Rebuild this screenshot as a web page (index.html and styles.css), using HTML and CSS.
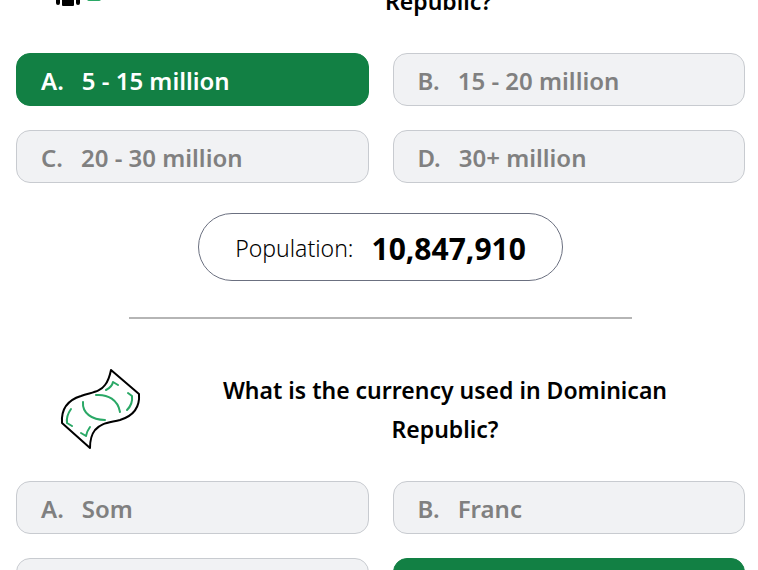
FILE: index.html
```html
<!DOCTYPE html>
<html lang="en">
  <head>
    <title>Dominican Republic Quiz</title>
    <meta charset="utf-8" />
    <meta name="viewport" content="width=device-width, initial-scale=1" />
    <link rel="stylesheet" href="styles.css">
  </head>
  <body>
    <main class="quiz">
      <section class="question">
        <div class="question-header">
          <svg class="icon-people" viewBox="0 0 76 48" aria-hidden="true">
            <g fill="#000">
              <circle cx="12" cy="7" r="6" />
              <rect x="6" y="15" width="12" height="33" rx="1" />
              <rect x="0" y="15" width="4" height="32" rx="2" />
              <rect x="20" y="15" width="4" height="32" rx="2" />
            </g>
            <g fill="none" stroke="#2aa866" stroke-width="2">
              <circle cx="38" cy="9" r="6" />
              <rect x="32" y="18" width="12" height="24" rx="1" />
              <circle cx="64" cy="9" r="6" />
              <path d="M58 34V20q0-2 2-2h8q2 0 2 2v14z" />
            </g>
          </svg>
          <h2>What is the population of Dominican Republic?</h2>
        </div>
        <div class="answers">
          <button type="button" class="answer correct"><span>A.</span><span>5 - 15 million</span></button>
          <button type="button" class="answer" disabled><span>B.</span><span>15 - 20 million</span></button>
          <button type="button" class="answer" disabled><span>C.</span><span>20 - 30 million</span></button>
          <button type="button" class="answer" disabled><span>D.</span><span>30+ million</span></button>
        </div>
        <p class="fact">Population: <strong>10,847,910</strong></p>
      </section>
      <hr />
      <section class="question">
        <div class="question-header">
          <svg class="icon-money" viewBox="0 1 89 80" fill="none" stroke-linecap="round" stroke-linejoin="round" aria-hidden="true">
            <path stroke="#000" stroke-width="2" d="M55 1L83 25C84 38 77 47 64 51C52 54 45 54 39 61C35 66 34 72 34 79L6 54C5 40 12 31 25 27C37 23 44 23 49 16C53 11 54 6 55 1Z" />
            <g stroke="#2aa866" stroke-width="2">
              <path d="M50 21Q56 18 57 13L62 16" />
              <path d="M72 24L76 27Q77 35 71 41" />
              <path d="M40 26C52 25 62 31 64 43" />
              <path d="M27 33C26 44 36 51 49 51" />
              <path d="M15 40Q10 47 11 54L16 57" />
              <path d="M25 64L30 67Q31 62 34 58" />
            </g>
          </svg>
          <h2>What is the currency used in Dominican Republic?</h2>
        </div>
        <div class="answers">
          <button type="button" class="answer" disabled><span>A.</span><span>Som</span></button>
          <button type="button" class="answer" disabled><span>B.</span><span>Franc</span></button>
          <button type="button" class="answer" disabled aria-label="C"></button>
          <button type="button" class="answer correct" aria-label="D"></button>
        </div>
      </section>
    </main>
  </body>
</html>
```

FILE: styles.css
```css
* {
  box-sizing: border-box;
}

body {
  margin: 0;
  height: 100vh;
  overflow: hidden;
  background: #fff;
  color: #000;
  font-family: "Noto Sans", "Open Sans", sans-serif;
}

.quiz {
  margin-top: -58px;
  padding: 0 13px 0 16px;
}

.question-header {
  display: flex;
  align-items: center;
  min-height: 80px;
  margin-bottom: 31px;
  padding-left: 40px;
}

.icon-people {
  flex: none;
  width: 76px;
  height: 48px;
}

.icon-money {
  flex: none;
  width: 89px;
  height: 80px;
  overflow: visible;
}

h2 {
  flex: 1;
  margin: 0;
  padding: 0 48px;
  font-size: 23px;
  font-weight: 600;
  line-height: 39px;
  text-align: center;
}

/* Answers */

.answers {
  display: grid;
  grid-template-columns: 1fr 1fr;
  gap: 24px;
}

.answer {
  display: flex;
  align-items: center;
  gap: 18px;
  height: 53px;
  padding: 2px 24px 0;
  border: 1px solid #c8cbd0;
  border-radius: 14px;
  background: #f1f2f4;
  color: #808080;
  font: inherit;
  font-size: 24px;
  font-weight: 600;
  text-align: left;
}

.answer.correct {
  border-color: #128044;
  background: #128044;
  color: #fff;
}

.fact {
  display: flex;
  align-items: center;
  justify-content: center;
  gap: 18px;
  width: fit-content;
  height: 68px;
  margin: 30px auto 36px;
  padding: 2px 36px 0;
  border: 1px solid #6b7080;
  border-radius: 34px;
  font-size: 23px;
  font-weight: 300;
}

.fact strong {
  font-size: 30px;
  font-weight: 700;
}

hr {
  width: 69%;
  height: 2px;
  margin: 0 auto 51px;
  border: none;
  background: #b5b5b5;
}
```
